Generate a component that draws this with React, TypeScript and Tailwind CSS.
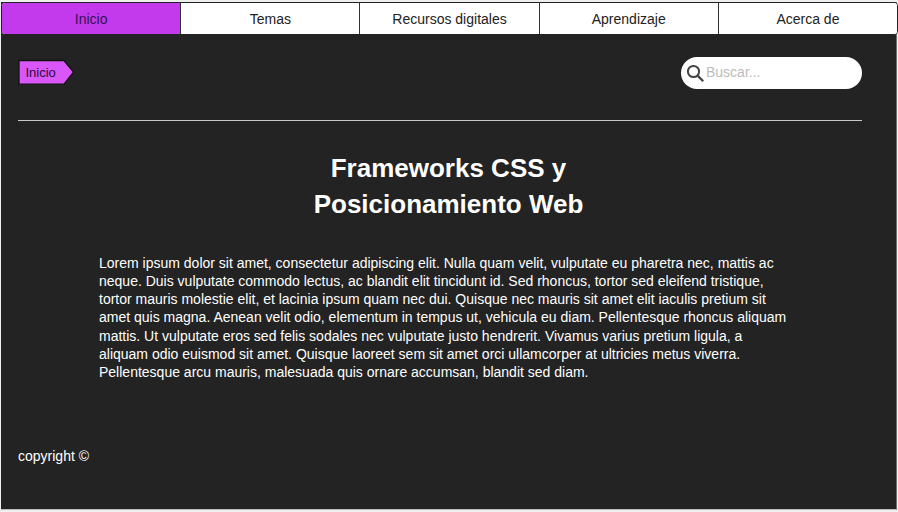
const tabs = ["Inicio", "Temas", "Recursos digitales", "Aprendizaje", "Acerca de"];

const lines = [
  "Lorem ipsum dolor sit amet, consectetur adipiscing elit. Nulla quam velit, vulputate eu pharetra nec, mattis ac",
  "neque. Duis vulputate commodo lectus, ac blandit elit tincidunt id. Sed rhoncus, tortor sed eleifend tristique,",
  "tortor mauris molestie elit, et lacinia ipsum quam nec dui. Quisque nec mauris sit amet elit iaculis pretium sit",
  "amet quis magna. Aenean velit odio, elementum in tempus ut, vehicula eu diam. Pellentesque rhoncus aliquam",
  "mattis. Ut vulputate eros sed felis sodales nec vulputate justo hendrerit. Vivamus varius pretium ligula, a",
  "aliquam odio euismod sit amet. Quisque laoreet sem sit amet orci ullamcorper at ultricies metus viverra.",
  "Pellentesque arcu mauris, malesuada quis ornare accumsan, blandit sed diam.",
];

function Nav() {
  return (
    <nav className="flex h-[33px] overflow-hidden rounded-[4px] border border-[#222] bg-white">
      {tabs.map((tab, i) => (
        <a
          key={tab}
          className={
            "flex flex-1 items-center justify-center border-r border-[#333] pt-px last:border-r-0 " +
            (i === 0 ? "bg-[#c23aeb] text-[#351457]" : "bg-white text-[#222]")
          }
        >
          {tab}
        </a>
      ))}
    </nav>
  );
}

function Breadcrumb() {
  return (
    <div className="relative h-[27px] w-[57px]">
      <svg className="absolute inset-0" width="57" height="27" viewBox="0 0 57 27">
        <path d="M1 1.5H46L55.5 13.2L46 25.2H1Z" fill="#d957f8" stroke="#111" strokeWidth="1.3" />
      </svg>
      <span className="relative block pl-[7.5px] text-[13px] leading-[27px] text-[#2b0b36]">Inicio</span>
    </div>
  );
}

function Search() {
  return (
    <div className="flex h-8 w-[181px] items-center rounded-full bg-white pl-[5px]">
      <svg width="19" height="19" viewBox="0 0 19 19" fill="none" stroke="#444">
        <circle cx="7.5" cy="7.5" r="5.6" strokeWidth="2" />
        <path d="M11.6 11.6L17.2 17.2" strokeWidth="2.3" />
      </svg>
      <span className="pb-[2px] pl-px text-[#bcbcbc]">Buscar...</span>
    </div>
  );
}

export default function App() {
  return (
    <div className="h-[512px] w-[898px] overflow-hidden bg-[#efefef] pt-[2px] pl-px font-['Liberation_Sans',Arial,sans-serif] text-[14px] leading-[18.2px]">
      <div className="h-[508px] w-[896px] border-r border-b border-r-[#707070] border-b-[#bbb] bg-[#232323] text-white">
        <div className="w-[897px]">
          <Nav />
        </div>
        <header className="ml-[17px] flex h-[85px] w-[844px] items-start justify-between pt-[22px]">
          <div className="pt-[2px]">
            <Breadcrumb />
          </div>
          <Search />
        </header>
        <hr className="ml-[17px] w-[844px] border-t border-[#c8c8c8]" />
        <h1 className="mt-[29px] text-center text-[26px] leading-[36.4px] font-bold">
          Frameworks CSS y<br />
          Posicionamiento Web
        </h1>
        <p className="mt-[31px] pl-[98px] whitespace-nowrap">
          {lines.map((line) => (
            <span key={line} className="block">{line}</span>
          ))}
        </p>
        <footer className="mt-[66px] pl-[17px]">copyright ©</footer>
      </div>
    </div>
  );
}
